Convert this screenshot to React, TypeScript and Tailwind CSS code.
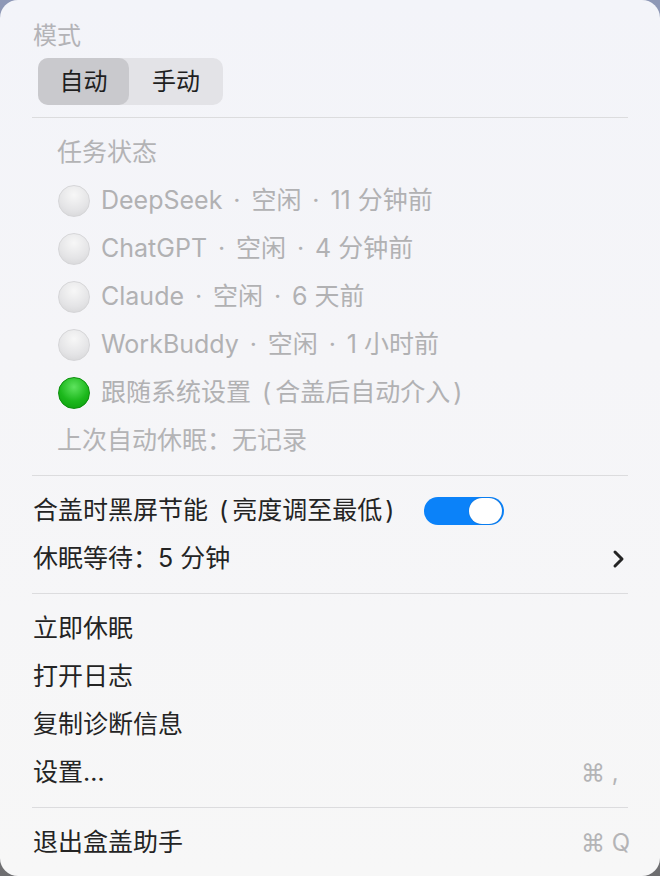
import React from "react";

const font = { fontFamily: '"Inter", "Noto Sans CJK SC", sans-serif' };

const tasks = [
	["DeepSeek", "空闲", "11 分钟前"],
	["ChatGPT", "空闲", "4 分钟前"],
	["Claude", "空闲", "6 天前"],
	["WorkBuddy", "空闲", "1 小时前"],
];

const Separator = () => (
	<div className="pt-[10px] pb-[11px]">
		<div className="h-px bg-[#dcdcde]" />
	</div>
);

const Mid = () => <span className="inline-block w-[29px] text-center">·</span>;

const Open = () => <span className="ml-[11px] mr-[4px]">(</span>;
const Close = () => <span className="ml-[3px]">)</span>;

const Dot = ({ on }: { on?: boolean }) =>
	on ? (
		<span className="w-8 h-8 rounded-full shrink-0 border border-[#0c8f0c] bg-[radial-gradient(circle_at_50%_30%,#5ee35e_0%,#1cb81c_55%,#0a9a0a_100%)]" />
	) : (
		<span className="w-8 h-8 rounded-full shrink-0 border border-[#d6d6d8] bg-[radial-gradient(circle_at_50%_30%,#f7f7f7_0%,#e4e4e6_60%,#d2d2d4_100%)]" />
	);

const Item = ({ label, shortcut }: { label: string; shortcut?: string }) => (
	<div className="h-12 flex items-center px-[33px] text-[25px] text-[#242424]">
		<span className="flex-1">{label}</span>
		{shortcut && (
			<span className="w-[46px] whitespace-nowrap text-[#b4b4b6] text-[24px]">{shortcut}</span>
		)}
	</div>
);

export default function App() {
	return (
		<div className="w-[660px] h-[876px] bg-[linear-gradient(180deg,#8e98b6_0%,#8d93a4_50%,#6e6e70_100%)]" style={font}>
			<div className="w-full h-full rounded-[18px] overflow-hidden bg-[linear-gradient(180deg,#f3f4f9_0%,#f5f5f8_40%,#f7f7f7_100%)] pt-[14px]">
				<div className="h-[44px] flex items-center px-[33px] text-[24px] text-[#b3b3b7]">模式</div>
				<div className="px-[38px]">
					<div className="inline-flex h-[47px] rounded-[10px] bg-[#e3e3e7] text-[24px] text-[#1f1f1f]">
						<span className="w-[91px] flex items-center justify-center rounded-[10px] bg-[#c9c9cd]">自动</span>
						<span className="w-[94px] flex items-center justify-center">手动</span>
					</div>
				</div>
				<div className="px-[32px]">
					<div className="pt-[12px] pb-[11px]">
						<div className="h-px bg-[#dcdcde]" />
					</div>
				</div>
				<div className="h-12 flex items-center px-[57px] text-[25px] text-[#b3b3b5]">任务状态</div>
				{tasks.map(([name, state, when]) => (
					<div key={name} className="h-12 flex items-center gap-[11px] pl-[58px] text-[25px] text-[#b1b1b3]">
						<Dot />
						<span className="whitespace-nowrap">
							{name}
							<Mid />
							{state}
							<Mid />
							{when}
						</span>
					</div>
				))}
				<div className="h-12 flex items-center gap-[11px] pl-[58px] text-[25px] text-[#b1b1b3]">
					<Dot on />
					<span className="whitespace-nowrap">
						跟随系统设置<Open />合盖后自动介入<Close />
					</span>
				</div>
				<div className="h-12 flex items-center px-[57px] text-[25px] text-[#b3b3b5]">上次自动休眠：无记录</div>
				<div className="px-[32px]">
					<Separator />
				</div>
				<div className="h-12 flex items-center px-[33px] text-[25px] text-[#242424]">
					<span className="whitespace-nowrap">
						合盖时黑屏节能<Open />亮度调至最低<Close />
					</span>
					<span className="ml-[30px] w-[80px] h-[28px] rounded-full bg-[#0b82f9] flex items-center justify-end p-[2px]">
						<span className="w-[33px] h-[26px] rounded-full bg-white shadow-[0_0_1px_rgba(0,0,0,0.35)]" />
					</span>
				</div>
				<div className="h-12 flex items-center px-[33px] text-[25px] text-[#242424]">
					<span className="flex-1">休眠等待：5 分钟</span>
					<svg width="14" height="20" viewBox="0 0 14 20" className="mr-[1px]">
						<path d="M3 3l7 7-7 7" fill="none" stroke="#242424" strokeWidth="3" strokeLinecap="round" strokeLinejoin="round" />
					</svg>
				</div>
				<div className="px-[32px]">
					<Separator />
				</div>
				<Item label="立即休眠" />
				<Item label="打开日志" />
				<Item label="复制诊断信息" />
				<Item label="设置…" shortcut="⌘ ," />
				<div className="px-[32px]">
					<Separator />
				</div>
				<Item label="退出盒盖助手" shortcut="⌘ Q" />
			</div>
		</div>
	);
}
